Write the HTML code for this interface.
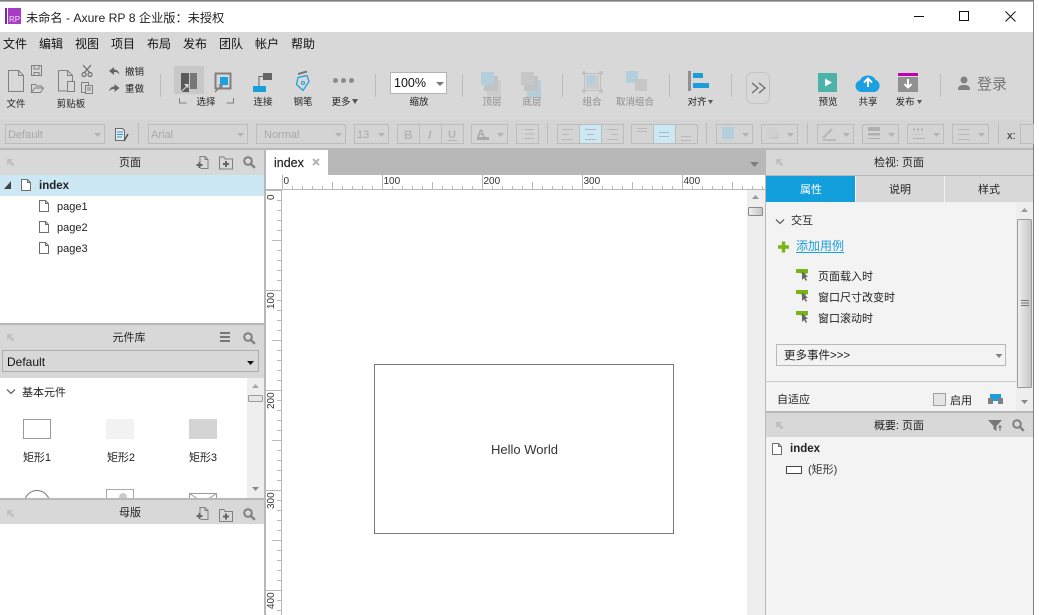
<!DOCTYPE html>
<html><head><meta charset="utf-8"><title>Axure RP 8</title>
<style>
html,body{margin:0;padding:0;background:#fff;width:1039px;height:615px;overflow:hidden}
svg{display:block}
text{font-family:"Liberation Sans","Noto Sans CJK SC",sans-serif;font-size:11px;fill:#222}
.c{text-anchor:middle}
.s{font-size:9.5px;fill:#222}
.g{font-size:9.5px;fill:#8c8c8c}
.f{font-size:11px;fill:#a8a8a8}
.m{font-size:12px;fill:#111}
.r{font-size:10px;fill:#333}
.b{font-weight:bold;font-size:11.5px;fill:#222}
</style></head><body>
<svg width="1039" height="615" viewBox="0 0 1039 615" xmlns="http://www.w3.org/2000/svg">
<defs>
<pattern id="hm" x="282" y="0" width="10" height="10" patternUnits="userSpaceOnUse"><rect width="1" height="10" fill="#b8b8b8"/></pattern>
<pattern id="hl" x="282" y="0" width="50" height="20" patternUnits="userSpaceOnUse"><rect width="1" height="20" fill="#b8b8b8"/></pattern>
<pattern id="hx" x="282" y="0" width="100" height="20" patternUnits="userSpaceOnUse"><rect width="1" height="20" fill="#b8b8b8"/></pattern>
<pattern id="vm" x="0" y="190" width="10" height="10" patternUnits="userSpaceOnUse"><rect width="10" height="1" fill="#b8b8b8"/></pattern>
<pattern id="vl" x="0" y="190" width="20" height="50" patternUnits="userSpaceOnUse"><rect width="20" height="1" fill="#b8b8b8"/></pattern>
<pattern id="vx" x="0" y="190" width="20" height="100" patternUnits="userSpaceOnUse"><rect width="20" height="1" fill="#b8b8b8"/></pattern>
<linearGradient id="th" x1="0" x2="1" y1="0" y2="0"><stop offset="0" stop-color="#f0f0f0"/><stop offset="1" stop-color="#c4c4c4"/></linearGradient>
<g id="doc"><path d="M.5.5h6l3 3v8h-9z M6.500.5v3h3" fill="#fff" stroke="#6e6e6e"/></g>
<g id="search"><circle cx="5" cy="5" r="3.800" fill="none" stroke="#808080" stroke-width="2"/><path d="M7.800 7.800l4 4" stroke="#808080" stroke-width="2.400"/></g>
<g id="pin"><path d="M1 1h6l-2 2 3.500 3.500-2 2L3 5 1 7z" fill="#c0c0c0"/></g>
<g id="newp"><path d="M3.500 7V.5h5l3 3v9H4" fill="none" stroke="#808080"/><path d="M8.500.5v3h3" fill="none" stroke="#808080"/><path d="M0 9h6M3 6v6" stroke="#666" stroke-width="2"/></g>
<g id="newf"><path d="M.5 2.500V12.500h13V2.500H6L5 .5H.5z" fill="none" stroke="#808080"/><path d="M4 7.500h6M7 4.500v6" stroke="#666" stroke-width="2"/></g>
<g id="ev"><path d="M0 0h12v4L9 5 3 4H0z" fill="#7ab317"/><path d="M6 2l0 9 2-2 2 3 1-1-1.500-3 2.500 0z" fill="#666"/></g>
<g id="dn"><path d="M0 0h7l-3.500 4z" fill="#b4b4b4"/></g>
</defs>

<!-- base -->
<rect width="1034" height="615" fill="#d8d8d8"/>
<rect x="0" y="0" width="1034" height="1.500" fill="#808080"/>
<rect x="0" y="2" width="1033" height="30" fill="#fff"/>
<rect x="1033" y="0" width="1" height="615" fill="#808080"/>

<!-- title bar -->
<rect x="5" y="8" width="2" height="16" fill="#7a2aa0"/>
<rect x="8" y="8" width="13" height="16" fill="#a83cc4"/>
<text x="9" y="22" style="font-size:8px;fill:#f3d8fa">RP</text>
<text x="26" y="22" style="font-size:12.200px;fill:#222">未命名 - Axure RP 8 企业版：未授权</text>
<path d="M914 16.500h10" stroke="#111" stroke-width="1"/>
<rect x="959.500" y="11.500" width="9" height="9" fill="none" stroke="#111"/>
<path d="M1005.500 11.500l10 10M1015.500 11.500l-10 10" stroke="#111" stroke-width="1"/>

<!-- menu -->
<g class="m"><text class="m" x="3" y="48">文件</text><text class="m" x="39" y="48">编辑</text><text class="m" x="75" y="48">视图</text><text class="m" x="111" y="48">项目</text><text class="m" x="147" y="48">布局</text><text class="m" x="183" y="48">发布</text><text class="m" x="219" y="48">团队</text><text class="m" x="255" y="48">帐户</text><text class="m" x="291" y="48">帮助</text></g>

<!-- toolbar left -->
<path d="M8.500 70.500h10l5 5v16h-15z M18.500 70.500v5h5" fill="none" stroke="#808080"/>
<path d="M31.500 65.500h10v10h-10z M34 65.500v3.500h5v-3.500 M34 75.500v-3h5v3" fill="none" stroke="#808080"/>
<path d="M31.500 92.500v-8h4l1 1.500h5v2 M31.500 92.500h9l3-4.500h-9z" fill="none" stroke="#808080"/>
<text class="s c" x="16" y="107">文件</text>
<path d="M58.500 70.500h9l5 5v7 M67.500 70.500v5h5 M58.500 70.500v20.500h9" fill="none" stroke="#808080"/>
<rect x="67.500" y="81.500" width="7" height="10" fill="#d8d8d8" stroke="#808080"/>
<path d="M83 65l7 8M91 65l-7 8" stroke="#707070" stroke-width="1.300"/><circle cx="84" cy="74.500" r="2" fill="none" stroke="#707070" stroke-width="1.200"/><circle cx="90" cy="74.500" r="2" fill="none" stroke="#707070" stroke-width="1.200"/>
<path d="M81.500 82.500h7v10h-7z" fill="none" stroke="#808080"/><path d="M85.500 85.500h7v8h-7z M87 88h4M87 90h4" fill="#d8d8d8" stroke="#808080"/>
<text class="s c" x="71" y="107">剪贴板</text>
<path d="M109 71l5-4v2.500c3 0 5 2 5.500 5-1.500-2-3-2.500-5.500-2.500V75z" fill="#666"/>
<path d="M119.500 88l-5-4v2.500c-3 0-5 2-5.500 5 1.500-2 3-2.500 5.500-2.500V92z" fill="#666"/>
<text class="s" x="125" y="75">撤销</text><text class="s" x="125" y="92">重做</text>
<rect x="160" y="74" width="1" height="23" fill="#bcbcbc"/>
<rect x="174" y="66" width="30" height="28" fill="#c8c8c8"/>
<rect x="181" y="73" width="8" height="19" fill="#5a5a5a"/><rect x="190" y="73" width="7" height="16" fill="#777"/>
<path d="M181 92l6-6" stroke="#ddd" stroke-width="1"/><path d="M184 84h4.500v4.500z" fill="#ddd"/>
<rect x="215.500" y="73.500" width="15" height="15" fill="#d8d8d8" stroke="#808080" stroke-width="2"/><rect x="220" y="77" width="8" height="8" fill="#1ba1e2"/>
<path d="M215 92l6-6" stroke="#808080" stroke-width="1.300"/><path d="M218 84.500h4.500v4.500z" fill="#808080"/>
<path d="M179.500 98v5h7M233.500 98v5h-7" fill="none" stroke="#808080"/>
<text class="s c" x="206" y="105">选择</text>
<rect x="263" y="73" width="9" height="7" fill="#666"/><path d="M263 76.500h-4v10" fill="none" stroke="#666"/><rect x="253" y="86" width="13" height="6" fill="#1a9fda"/>
<text class="s c" x="263" y="105">连接</text>
<path d="M298 77.500l9-2 2 6-6 9-6.500-6z" fill="none" stroke="#1a9fda" stroke-width="1.200"/><circle cx="303" cy="83" r="1.500" fill="none" stroke="#1a9fda"/><path d="M298 74l9-2.500" stroke="#777" stroke-width="2"/>
<text class="s c" x="303" y="105">钢笔</text>
<circle cx="335.500" cy="80.500" r="2.500" fill="#8a8a8a"/><circle cx="343.500" cy="80.500" r="2.500" fill="#8a8a8a"/><circle cx="351.500" cy="80.500" r="2.500" fill="#8a8a8a"/>
<text class="s c" x="341" y="105">更多</text><path d="M352 99h6l-3 5z" fill="#555"/>

<!-- toolbar mid -->
<rect x="375" y="74" width="1" height="23" fill="#bcbcbc"/>
<rect x="390.500" y="72.500" width="56" height="21" fill="#fff" stroke="#b4b4b4"/>
<text x="394" y="87" style="font-size:12.500px;fill:#111">100%</text><path d="M436 82h8l-4 4z" fill="#777"/>
<text class="s c" x="419" y="105">缩放</text>
<rect x="462" y="74" width="1" height="23" fill="#bcbcbc"/>
<rect x="487" y="80" width="14" height="17" fill="#cccccc"/><rect x="484" y="76" width="14" height="15" fill="#c2c2c2"/><rect x="481" y="72" width="13" height="13" fill="#b4cedc"/>
<text class="g c" x="492" y="105">顶层</text>
<rect x="527" y="80" width="14" height="17" fill="#b4cedc"/><rect x="524" y="76" width="14" height="15" fill="#c2c2c2"/><rect x="521" y="72" width="13" height="13" fill="#c6c6c6"/>
<text class="g c" x="532" y="105">底层</text>
<rect x="562" y="74" width="1" height="23" fill="#bcbcbc"/>
<rect x="584.500" y="73.500" width="16" height="17" fill="none" stroke="#c0c0c0"/><rect x="586" y="75" width="13" height="14" fill="#cccccc"/><rect x="586" y="75" width="9" height="9" fill="#b4cedc"/>
<circle cx="584" cy="73" r="2" fill="#c0c0c0"/><circle cx="601" cy="73" r="2" fill="#c0c0c0"/><circle cx="584" cy="91" r="2" fill="#c0c0c0"/><circle cx="601" cy="91" r="2" fill="#c0c0c0"/>
<text class="g c" x="592" y="105">组合</text>
<rect x="626" y="71" width="12" height="12" fill="#b4cedc"/><rect x="635" y="79" width="12" height="12" fill="#c6c6c6"/>
<text class="g c" x="635" y="105">取消组合</text>
<rect x="669" y="74" width="1" height="23" fill="#bcbcbc"/>
<rect x="688" y="71" width="3" height="20" fill="#909090"/><rect x="693" y="73" width="10" height="5" fill="#1a9fda"/><rect x="693" y="83" width="16" height="5" fill="#1a9fda"/>
<text class="s c" x="697" y="105">对齐</text><path d="M708 100h5l-2.500 4z" fill="#555"/>
<rect x="731" y="74" width="1" height="23" fill="#bcbcbc"/>
<rect x="746.500" y="72.500" width="23" height="31" rx="6" fill="none" stroke="#c4c4c4"/>
<path d="M752 83l6 5-6 5M759 83l6 5-6 5" fill="none" stroke="#666" stroke-width="1.200"/>

<!-- toolbar right -->
<rect x="818" y="73" width="19" height="19" fill="#4bb3a7"/><path d="M825 78.500l7 4-7 4z" fill="#fff"/>
<text class="s c" x="828" y="105">预览</text>
<path d="M861 92a6 6 0 0 1-1-11.800 8.500 7.500 0 0 1 15.500-.5 6.500 6.500 0 0 1-.5 12.300z" fill="#1ba1e2"/>
<path d="M868 87v-8M864 82.500l4-4 4 4" fill="none" stroke="#fff" stroke-width="2"/>
<text class="s c" x="868" y="105">共享</text>
<rect x="898" y="73" width="20" height="3" fill="#c000b0"/><rect x="898" y="77" width="20" height="15" fill="#909090"/>
<path d="M908 79v8M904.500 84l3.500 3.500 3.500-3.500" fill="none" stroke="#fff" stroke-width="2"/>
<text class="s c" x="905" y="105">发布</text><path d="M917 100h5l-2.500 4z" fill="#555"/>
<rect x="940" y="74" width="1" height="23" fill="#bcbcbc"/>
<circle cx="964" cy="80" r="3.500" fill="#808080"/><path d="M958 90c0-4 2-5 6-5s6 1 6 5z" fill="#808080"/>
<text x="977" y="89" style="font-size:15px;fill:#777">登录</text>

<!-- format bar -->
<rect x="0" y="119" width="1033" height="29" fill="#d4d4d4"/>
<rect x="0" y="148" width="1033" height="2" fill="#b8b8b8"/>
<g fill="none" stroke="#bcbcbc">
<rect x="5.500" y="124.500" width="99" height="19"/><rect x="148.500" y="124.500" width="99" height="19"/><rect x="256.500" y="124.500" width="89" height="19"/><rect x="354.500" y="124.500" width="34" height="19"/>
<rect x="397.500" y="124.500" width="22" height="19"/><rect x="419.500" y="124.500" width="22" height="19"/><rect x="441.500" y="124.500" width="22" height="19"/>
<rect x="471.500" y="124.500" width="36" height="19"/><rect x="516.500" y="124.500" width="22" height="19"/>
<rect x="557.500" y="124.500" width="22" height="19"/><rect x="579.500" y="124.500" width="22" height="19" fill="#cce8f4"/><rect x="601.500" y="124.500" width="22" height="19"/>
<rect x="631.500" y="124.500" width="22" height="19"/><rect x="653.500" y="124.500" width="22" height="19" fill="#cce8f4"/><rect x="675.500" y="124.500" width="22" height="19"/>
<rect x="716.500" y="124.500" width="36" height="19"/><rect x="761.500" y="124.500" width="36" height="19"/><rect x="817.500" y="124.500" width="36" height="19"/><rect x="862.500" y="124.500" width="36" height="19"/><rect x="907.500" y="124.500" width="36" height="19"/><rect x="952.500" y="124.500" width="36" height="19"/>
<rect x="1020.500" y="124.500" width="13" height="19"/>
</g>
<rect x="138" y="123" width="1" height="21" fill="#bcbcbc"/><rect x="547" y="123" width="1" height="21" fill="#bcbcbc"/><rect x="706" y="123" width="1" height="21" fill="#bcbcbc"/><rect x="807" y="123" width="1" height="21" fill="#bcbcbc"/><rect x="998" y="123" width="1" height="21" fill="#bcbcbc"/>
<text class="f" x="8" y="138">Default</text><text class="f" x="151" y="138">Arial</text><text class="f" x="264" y="138">Normal</text><text class="f" x="357" y="138">13</text>
<use href="#dn" x="94" y="133"/><use href="#dn" x="237" y="133"/><use href="#dn" x="335" y="133"/><use href="#dn" x="378" y="133"/><use href="#dn" x="497" y="133"/><use href="#dn" x="742" y="133"/><use href="#dn" x="787" y="133"/><use href="#dn" x="843" y="133"/><use href="#dn" x="888" y="133"/><use href="#dn" x="933" y="133"/><use href="#dn" x="978" y="133"/>
<path d="M115.500 128.500h7l2 2v10h-9z" fill="#e8e8e8" stroke="#6a6a6a"/><path d="M117 132h6M117 134.500h6M117 137h5" stroke="#1a9fda"/><path d="M124 141l4-7" stroke="#555" stroke-width="1.500"/>
<text x="404" y="139" style="font-size:12px;font-weight:bold;fill:#b4b4b4">B</text><text x="428" y="139" style="font-size:12px;font-style:italic;font-weight:bold;fill:#b4b4b4">I</text><text x="448" y="138" style="font-size:11px;font-weight:bold;fill:#b4b4b4">U</text><path d="M448 140.500h9" stroke="#b4b4b4"/>
<text x="477" y="137" style="font-size:11px;font-weight:bold;fill:#a8a8a8">A</text><rect x="477" y="137" width="12" height="3" fill="#a8a8a8"/>
<path d="M522 129.500h1M522 134h1M522 138.500h1" stroke="#9ecbdf"/><path d="M525 129.500h9M525 134h9M525 138.500h9" stroke="#b4b4b4"/>
<path d="M562 129.500h11M562 134.500h7M562 139.500h11" stroke="#b8b8b8"/><path d="M585 129.500h11M587 134.500h7M585 139.500h11" stroke="#b0b8bc"/><path d="M607 129.500h11M611 134.500h7M607 139.500h11" stroke="#b8b8b8"/>
<path d="M637 128.500h10M637 131.500h10" stroke="#b8b8b8"/><path d="M659 132.500h10M659 136.500h10" stroke="#a8bcc6"/><path d="M681 136.500h10M681 140.500h10" stroke="#b8b8b8"/>
<rect x="722" y="127" width="12" height="12" fill="#b4cedc"/>
<rect x="769" y="130" width="9" height="9" fill="#c8c8c8"/><rect x="767" y="127" width="10" height="10" fill="#d0d0d0"/>
<path d="M823 138l9-9" stroke="#bababa" stroke-width="2.500"/><rect x="823" y="139" width="13" height="2" fill="#bababa"/>
<rect x="868" y="127" width="12" height="4" fill="#b0b0b0"/><rect x="868" y="133" width="12" height="2.500" fill="#b0b0b0"/><rect x="868" y="138" width="12" height="1" fill="#b0b0b0"/>
<path d="M913 129.500h12" stroke="#b0b0b0" stroke-dasharray="2 2" stroke-width="2"/><path d="M913 134.500h12" stroke="#b0b0b0" stroke-dasharray="1 2"/><path d="M913 138.500h12" stroke="#b0b0b0"/>
<path d="M958 129.500h12M958 134.500h12M958 139.500h12" stroke="#b8b8b8"/>
<text x="1007" y="139" style="font-size:11px;fill:#222">x:</text>

<!-- left panels -->
<rect x="0" y="150" width="265" height="465" fill="#fff"/>
<rect x="264" y="150" width="2" height="465" fill="#b8b8b8"/>
<rect x="0" y="150" width="264" height="25" fill="#d8d8d8"/>
<use href="#pin" x="6" y="158"/>
<text class="c" x="130" y="166" style="font-size:11px">页面</text>
<use href="#newp" x="196.500" y="156"/><use href="#newf" x="219" y="156.500"/><use href="#search" x="243" y="156"/>
<rect x="0" y="175" width="264" height="21" fill="#cce8f4"/>
<path d="M11 181v8H4z" fill="#444"/>
<use href="#doc" x="21" y="179"/>
<text class="b" x="39" y="189">index</text>
<use href="#doc" x="39" y="200"/><text x="57" y="210" style="fill:#222">page1</text>
<use href="#doc" x="39" y="221"/><text x="57" y="231" style="fill:#222">page2</text>
<use href="#doc" x="39" y="242"/><text x="57" y="252" style="fill:#222">page3</text>

<rect x="0" y="323" width="264" height="2" fill="#b8b8b8"/>
<rect x="0" y="325" width="264" height="53" fill="#d8d8d8"/>
<use href="#pin" x="6" y="333"/>
<text class="c" x="129" y="341">元件库</text>
<path d="M220 333h10M220 337h10M220 341h10" stroke="#777" stroke-width="2"/>
<use href="#search" x="243" y="332"/>
<rect x="2.500" y="350.500" width="256" height="21" fill="#d8d8d8" stroke="#aeaeae"/>
<text x="7" y="366" style="font-size:12px;fill:#111">Default</text><path d="M247 361h7l-3.500 4z" fill="#111"/>
<rect x="0" y="378" width="264" height="120" fill="#fff"/>
<rect x="247" y="378" width="17" height="120" fill="#eeeeee"/>
<path d="M252 388h7l-3.500-4z" fill="#a8a8a8"/><path d="M252 487h7l-3.500 4z" fill="#888"/>
<rect x="248.500" y="395.500" width="14" height="6" rx="1" fill="#e6e6e6" stroke="#999"/>
<path d="M7 389.500l4 4 4-4" fill="none" stroke="#666" stroke-width="1.300"/>
<text x="22" y="396">基本元件</text>
<rect x="23.500" y="419.500" width="27" height="19" fill="#fff" stroke="#999"/>
<rect x="106" y="419" width="28" height="20" fill="#f2f2f2"/>
<rect x="189" y="419" width="28" height="20" fill="#d4d4d4"/>
<text class="c" x="37" y="461">矩形1</text><text class="c" x="121" y="461">矩形2</text><text class="c" x="203" y="461">矩形3</text>
<circle cx="37" cy="503" r="12.500" fill="#fff" stroke="#777"/>
<rect x="106.500" y="489.500" width="27" height="20" fill="#fff" stroke="#aaa"/><circle cx="123" cy="497" r="4" fill="#ccc"/>
<rect x="189.500" y="493.500" width="27" height="20" fill="#fff" stroke="#999"/><path d="M189.500 493.500l13.500 9 13.500-9" fill="none" stroke="#999"/>
<rect x="0" y="498" width="264" height="2" fill="#b8b8b8"/>
<rect x="0" y="500" width="264" height="24" fill="#d8d8d8"/>
<use href="#pin" x="6" y="509"/>
<text class="c" x="130" y="516">母版</text>
<use href="#newp" x="196.500" y="507"/><use href="#newf" x="219" y="509"/><use href="#search" x="243" y="508"/>
<rect x="0" y="524" width="264" height="91" fill="#fff"/>

<!-- centre -->
<rect x="266" y="150" width="499" height="25" fill="#b8b8b8"/>
<rect x="266" y="150" width="62" height="25" fill="#fff"/>
<text x="274" y="167" style="font-size:12.500px;fill:#222;stroke:#222;stroke-width:.2px">index</text>
<path d="M313 159l6 6M319 159l-6 6" stroke="#b4b4b4" stroke-width="2"/>
<path d="M750 162h9l-4.500 5z" fill="#7e7e7e"/>
<rect x="266" y="175" width="499" height="440" fill="#fff"/>
<rect x="266" y="189" width="499" height="1" fill="#b8b8b8"/>
<rect x="282" y="186" width="483" height="3" fill="url(#hm)"/>
<rect x="282" y="182" width="483" height="7" fill="url(#hl)"/>
<rect x="282" y="175" width="483" height="14" fill="url(#hx)"/>
<text class="r" x="283.500" y="184">0</text><text class="r" x="383.500" y="184">100</text><text class="r" x="483.500" y="184">200</text><text class="r" x="583.500" y="184">300</text><text class="r" x="683.500" y="184">400</text>
<rect x="281" y="190" width="1" height="425" fill="#b8b8b8"/>
<rect x="277" y="190" width="4" height="425" fill="url(#vm)"/>
<rect x="272" y="190" width="9" height="425" fill="url(#vl)"/>
<rect x="266" y="190" width="15" height="425" fill="url(#vx)"/>
<g class="r">
<text class="r" transform="translate(274,200) rotate(-90)">0</text>
<text class="r" transform="translate(274,309) rotate(-90)">100</text>
<text class="r" transform="translate(274,409) rotate(-90)">200</text>
<text class="r" transform="translate(274,509) rotate(-90)">300</text>
<text class="r" transform="translate(274,609) rotate(-90)">400</text>
</g>
<rect x="747" y="190" width="18" height="425" fill="#eeeeee"/>
<path d="M752 199h7l-3.500-4z" fill="#999"/>
<rect x="748.500" y="207.500" width="14" height="8" rx="1" fill="url(#th)" stroke="#888"/>
<rect x="374.500" y="364.500" width="299" height="169" fill="#fff" stroke="#797979"/>
<text class="c" x="524.500" y="454" style="font-size:13px;fill:#333">Hello World</text>

<!-- right panels -->
<rect x="765" y="150" width="1" height="465" fill="#b8b8b8"/>
<use href="#pin" x="775" y="158"/>
<text class="c" x="899" y="166">检视: 页面</text>
<rect x="766" y="175" width="267" height="1" fill="#b8b8b8"/>
<rect x="766" y="176" width="89" height="26" fill="#129fdb"/>
<rect x="855" y="176" width="1" height="26" fill="#f3f3f3"/><rect x="944" y="176" width="1" height="26" fill="#f3f3f3"/>
<text class="c" x="811" y="193" style="fill:#fff;font-size:11px">属性</text><text class="c" x="900" y="193">说明</text><text class="c" x="989" y="193">样式</text>
<rect x="766" y="202" width="267" height="209" fill="#f3f3f3"/>
<rect x="1016" y="202" width="17" height="209" fill="#eeeeee"/>
<path d="M1021 212h7l-3.500-4z" fill="#999"/><path d="M1021 400h7l-3.500 4z" fill="#888"/>
<rect x="1017.500" y="219.500" width="14" height="168" rx="1" fill="url(#th)" stroke="#999"/>
<path d="M1021 300.500h8M1021 303h8M1021 305.500h8" stroke="#777"/>
<path d="M776 219.500l4 4 4-4" fill="none" stroke="#666" stroke-width="1.300"/>
<text x="791" y="224">交互</text>
<path d="M778 247h11M783.500 241.500v11" stroke="#7ab317" stroke-width="3.400"/>
<text x="796" y="250" style="font-size:12px;fill:#1a9fd9">添加用例</text><path d="M796 252.500h48" stroke="#1a9fd9"/>
<use href="#ev" x="796" y="269"/><text x="818" y="280">页面载入时</text>
<use href="#ev" x="796" y="290"/><text x="818" y="301">窗口尺寸改变时</text>
<use href="#ev" x="796" y="311"/><text x="818" y="322">窗口滚动时</text>
<rect x="776.500" y="344.500" width="229" height="21" fill="#f3f3f3" stroke="#b8b8b8"/>
<text x="784" y="359" style="font-size:11.500px">更多事件&gt;&gt;&gt;</text><path d="M995.500 354h7l-3.500 4z" fill="#808080"/>
<rect x="766" y="381" width="250" height="1" fill="#cccccc"/>
<text x="777" y="403">自适应</text>
<rect x="933.500" y="393.500" width="12" height="12" fill="#e4e4e4" stroke="#a0a0a0"/>
<text x="950" y="404">启用</text>
<rect x="990" y="394" width="11" height="7" fill="#1a9fda"/><rect x="988" y="398" width="5" height="6" fill="#808080"/><rect x="998" y="398" width="5" height="6" fill="#808080"/>
<rect x="766" y="411" width="267" height="2" fill="#b8b8b8"/>
<rect x="766" y="413" width="267" height="24" fill="#d8d8d8"/>
<use href="#pin" x="775" y="421"/>
<text class="c" x="899" y="429">概要: 页面</text>
<path d="M988 420h14l-5.500 6v5l-3-2v-3z" fill="#777"/><path d="M1000 431v-5M998.500 427.500l1.500-2 1.500 2" fill="none" stroke="#777"/>
<use href="#search" x="1012" y="419"/>
<rect x="766" y="437" width="267" height="178" fill="#f3f3f3"/>
<use href="#doc" x="772" y="443"/>
<text class="b" x="790" y="452">index</text>
<rect x="786.500" y="466.500" width="15" height="7" fill="#fff" stroke="#444"/>
<text x="808" y="473" style="font-size:11px;fill:#333">(矩形)</text>
</svg>
</body></html>
